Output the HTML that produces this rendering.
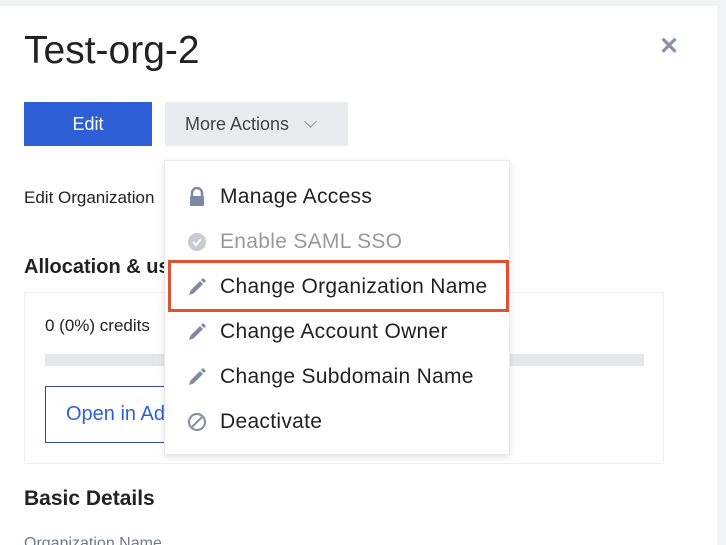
<!DOCTYPE html>
<html><head><style>
*{margin:0;padding:0;box-sizing:border-box}
html,body{width:726px;height:545px;overflow:hidden}
body{background:#f2f3f4;font-family:"Liberation Sans",sans-serif;color:#1f2329;position:relative}
.panel{position:absolute;left:0;top:6px;width:717px;height:539px;background:#fff}
.a{position:absolute;white-space:nowrap}
.item{position:absolute;left:0;width:346px;height:45px;font-size:21px;letter-spacing:0.3px;line-height:45px;padding-left:55px;color:#222}
.item svg{position:absolute;left:22px;top:13px}
</style></head><body>
<div class="panel"></div>
<div class="a" style="left:24px;top:29px;font-size:39px;font-weight:300;color:#222">Test-org-2</div>
<div class="a" style="left:659px;top:32px;font-size:24px;color:#8a93a6;font-weight:bold">✕</div>
<div class="a" style="left:24px;top:102px;width:128px;height:44px;background:#2f5fd6;color:#fff;font-size:18px;text-align:center;line-height:44px">Edit</div>
<div class="a" style="left:165px;top:102px;width:183px;height:44px;background:#e9ebee;color:#444;font-size:18px;line-height:44px;padding-left:20px">More Actions <span style="display:inline-block;width:9px;height:9px;border-right:1.5px solid #999;border-bottom:1.5px solid #999;transform:rotate(45deg);margin-left:12px;position:relative;top:-4px"></span></div>
<div class="a" style="left:24px;top:188px;font-size:17px;color:#222">Edit Organization</div>
<div class="a" style="left:24px;top:256px;font-size:20px;font-weight:bold;color:#222">Allocation &amp; usage</div>
<div class="a" style="left:24px;top:292px;width:640px;height:172px;border:1px solid #eceef0"></div>
<div class="a" style="left:45px;top:316px;font-size:17px;color:#222">0 (0%) credits</div>
<div class="a" style="left:45px;top:354px;width:599px;height:12px;background:#e6e7e9"></div>
<div class="a" style="left:45px;top:386px;width:160px;height:57px;border:1px solid #2f4a9a;color:#2f5fd6;font-size:20px;line-height:55px;padding-left:20px">Open in Admin</div>
<div class="a" style="left:24px;top:487px;font-size:21px;font-weight:bold;color:#222">Basic Details</div>
<div class="a" style="left:24px;top:535px;font-size:16px;color:#6b7a99">Organization Name</div>

<div class="a" style="left:164px;top:160px;width:346px;height:295px;background:#fff;border:1px solid #e6e8eb;box-shadow:0 2px 6px rgba(0,0,0,.12)">
 <div class="item" style="top:13px"><svg width="20" height="20" viewBox="0 0 20 20"><path d="M5 9V6a5 5 0 0 1 10 0v3" fill="none" stroke="#7d8aa3" stroke-width="2.5"/><rect x="3" y="9" width="14" height="10" rx="1" fill="#7d8aa3"/></svg>Manage Access</div>
 <div class="item" style="top:58px;color:#999"><svg width="20" height="20" viewBox="0 0 20 20"><circle cx="10" cy="10" r="9" fill="#c6cad2"/><path d="M6 10l3 3 5-6" fill="none" stroke="#fff" stroke-width="2"/></svg>Enable SAML SSO</div>
 <div class="item" style="top:103px"><svg width="20" height="20" viewBox="0 0 20 20"><path d="M2 18l1.5-4.5L13 4l3 3-9.5 9.5z M14 3l2-2 3 3-2 2z" fill="#7d8aa3"/></svg>Change Organization Name</div>
 <div class="item" style="top:148px"><svg width="20" height="20" viewBox="0 0 20 20"><path d="M2 18l1.5-4.5L13 4l3 3-9.5 9.5z M14 3l2-2 3 3-2 2z" fill="#7d8aa3"/></svg>Change Account Owner</div>
 <div class="item" style="top:193px"><svg width="20" height="20" viewBox="0 0 20 20"><path d="M2 18l1.5-4.5L13 4l3 3-9.5 9.5z M14 3l2-2 3 3-2 2z" fill="#7d8aa3"/></svg>Change Subdomain Name</div>
 <div class="item" style="top:238px"><svg width="20" height="20" viewBox="0 0 20 20"><circle cx="10" cy="10" r="8" fill="none" stroke="#8a93a6" stroke-width="2.2"/><path d="M5 15L15 5" stroke="#8a93a6" stroke-width="2.2"/></svg>Deactivate</div>
</div>
<div class="a" style="left:168px;top:260px;width:341px;height:52px;border:3px solid #e0522f"></div>
</body></html>
